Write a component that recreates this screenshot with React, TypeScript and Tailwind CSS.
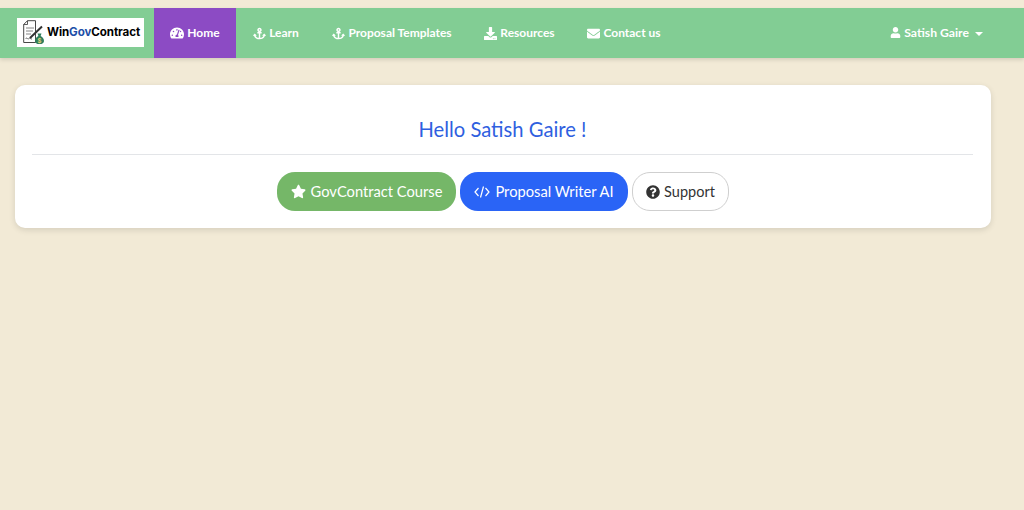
import React from "react";
import { FaTachometerAlt, FaAnchor, FaDownload, FaEnvelope, FaUser, FaStar, FaQuestionCircle } from "react-icons/fa";

function Logo() {
  return (
    <div className="mb-[1px] flex h-[29px] w-[127px] items-center bg-white pl-[6px]">
      <svg width="23" height="25" viewBox="0 0 23 25" className="shrink-0">
        <path d="M0.7 4.5 L4.5 0.7 H12.5 V22.5 H0.7 Z" fill="#fff" stroke="#333" strokeWidth="0.9" />
        <path d="M4.5 0.7 V4.5 H0.7" fill="none" stroke="#333" strokeWidth="0.8" />
        <path d="M3 8h8M3 11h7M3 14h5" stroke="#666" strokeWidth="0.8" />
        <path d="M7 18 L19 6.5" stroke="#333" strokeWidth="2" />
        <path d="M2.5 19c1.5-2.5 2 1 3.5-.5s1 1 3 .5" stroke="#333" strokeWidth="0.7" fill="none" />
        <path d="M14.5 13.5h4l-.9 2.4c2.3 1 3.4 3 3.4 5 0 2-1.6 3.2-4.5 3.2s-4.5-1.2-4.5-3.2c0-2 1.1-4 3.4-5z" fill="#2f7d5b" />
        <text x="16.5" y="22.5" fontSize="6" fontWeight="700" textAnchor="middle" fill="#e8d77a" fontFamily="Inter, sans-serif">$</text>
      </svg>
      <span className="ml-[1px] whitespace-nowrap text-[11.6px] font-bold text-black [font-family:'Inter',sans-serif] tracking-[-0.1px]">
        Win<span className="text-[#1d4fa8]">Gov</span>Contract
      </span>
    </div>
  );
}

function NavItem({ icon, label, active, w }: { icon: React.ReactNode; label: string; active?: boolean; w: string }) {
  return (
    <a className={`flex h-full items-center justify-center gap-[3px] text-[12px] font-bold text-white ${w} ${active ? "bg-[#8c4bc4]" : ""}`}>
      {icon}
      <span className="whitespace-nowrap">{label}</span>
    </a>
  );
}

export default function App() {
  return (
    <div className="min-h-[510px] bg-[#f2ead6] pt-[8px] [font-family:'Lato',sans-serif]">
      <nav className="flex h-[50px] items-center bg-[#82cd94] pl-[17px] pr-[41px] shadow-[0_2px_4px_rgba(0,0,0,0.12)]">
        <Logo />
        <div className="ml-[10px] flex h-full items-center">
          <NavItem w="w-[82px]" active label="Home" icon={<FaTachometerAlt className="text-[14px]" />} />
          <NavItem w="w-[80px]" label="Learn" icon={<FaAnchor className="text-[13px]" />} />
          <NavItem w="w-[152px]" label="Proposal Templates" icon={<FaAnchor className="text-[13px]" />} />
          <NavItem w="w-[103px]" label="Resources" icon={<FaDownload className="text-[13px]" />} />
          <NavItem w="w-[106px]" label="Contact us" icon={<FaEnvelope className="text-[13px]" />} />
        </div>
        <div className="ml-auto flex items-center gap-[3px] text-[12.2px] font-bold text-white">
          <FaUser className="text-[11px]" />
          <span>Satish Gaire</span>
          <span className="ml-[3px] h-0 w-0 translate-y-[1px] border-x-[4px] border-t-[4px] border-x-transparent border-t-white" />
        </div>
      </nav>
      <main className="px-[15px] pt-[27px]">
        <section className="mr-[18px] rounded-[10px] bg-white pb-[17px] pl-[17px] pr-[18px] pt-[31px] shadow-[0_2px_6px_rgba(0,0,0,0.12)]">
          <h1 className="pb-[12px] text-center text-[20.2px] leading-[26px] text-[#2f5fe0]">Hello Satish Gaire !</h1>
          <div className="border-t border-[#e3e5e8]" />
          <div className="ml-[1px] mt-[17px] flex justify-center gap-[4px]">
            <a className="flex h-[39px] w-[179px] items-center justify-center gap-[5px] rounded-[18px] bg-[#75b768] text-[14.7px] text-white">
              <FaStar className="text-[15px]" /> GovContract Course
            </a>
            <a className="flex h-[39px] w-[168px] items-center justify-center gap-[5px] rounded-[18px] bg-[#2a64f6] text-[14.7px] text-white">
              <svg width="16" height="14" viewBox="0 0 16 14" fill="none" stroke="white" strokeWidth="1.2" className="shrink-0">
                <path d="M4.5 3 L1 7 L4.5 11" />
                <path d="M11.5 3 L15 7 L11.5 11" />
                <path d="M9.5 1.5 L6.5 12.5" />
              </svg>
              Proposal Writer AI
            </a>
            <a className="flex h-[39px] w-[97px] items-center justify-center gap-[4px] rounded-[18px] border border-[#cfcfcf] bg-white text-[14.5px] text-[#333]">
              <FaQuestionCircle className="text-[14px]" /> Support
            </a>
          </div>
        </section>
      </main>
    </div>
  );
}
